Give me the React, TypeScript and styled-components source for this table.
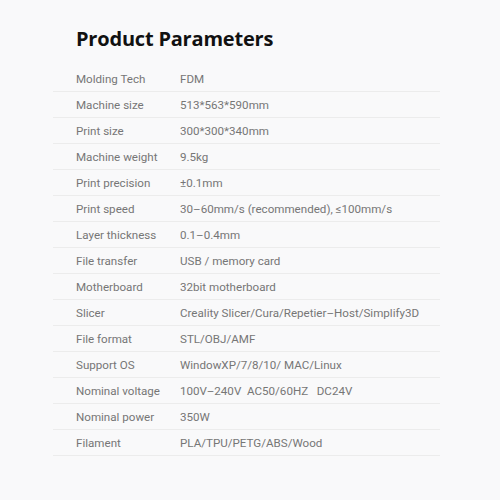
import React from "react";
import styled, { createGlobalStyle } from "styled-components";

const Global = createGlobalStyle`
  html, body { margin: 0; padding: 0; background: #f9f9fa; }
  body { width: 500px; height: 500px; overflow: hidden; }
`;

const Page = styled.div`
  padding: 25px 60px 0 53px;
  display: flex;
  flex-direction: column;
`;

const Title = styled.h1`
  margin: 0 0 13px 0;
  padding-left: 23px;
  font-family: "Open Sans", "Noto Sans", sans-serif;
  font-weight: 700;
  font-size: 20px;
  line-height: 28px;
  color: #111;
  letter-spacing: -0.2px;
`;

const Table = styled.div`
  display: flex;
  flex-direction: column;
`;

const Row = styled.div`
  display: grid;
  grid-template-columns: 104px 1fr;
  align-items: center;
  height: 26px;
  padding-left: 23px;
  border-bottom: 1px solid #ececec;
  box-sizing: border-box;
  font-family: Roboto, "Liberation Sans", sans-serif;
  font-size: 11.6px;
  color: #767676;
  white-space: nowrap;
`;

const Label = styled.span``;
const Value = styled.span``;

const rows: [string, string][] = [
  ["Molding Tech", "FDM"],
  ["Machine size", "513*563*590mm"],
  ["Print size", "300*300*340mm"],
  ["Machine weight", "9.5kg"],
  ["Print precision", "±0.1mm"],
  ["Print speed", "30–60mm/s (recommended), ≤100mm/s"],
  ["Layer thickness", "0.1–0.4mm"],
  ["File transfer", "USB / memory card"],
  ["Motherboard", "32bit motherboard"],
  ["Slicer", "Creality Slicer/Cura/Repetier–Host/Simplify3D"],
  ["File format", "STL/OBJ/AMF"],
  ["Support OS", "WindowXP/7/8/10/ MAC/Linux"],
  ["Nominal voltage", "100V–240V\u00a0\u00a0AC50/60HZ\u00a0\u00a0\u00a0DC24V"],
  ["Nominal power", "350W"],
  ["Filament", "PLA/TPU/PETG/ABS/Wood"],
];

export default function App() {
  return (
    <>
      <Global />
      <Page>
        <Title>Product Parameters</Title>
        <Table>
          {rows.map(([k, v]) => (
            <Row key={k}>
              <Label>{k}</Label>
              <Value>{v}</Value>
            </Row>
          ))}
        </Table>
      </Page>
    </>
  );
}
